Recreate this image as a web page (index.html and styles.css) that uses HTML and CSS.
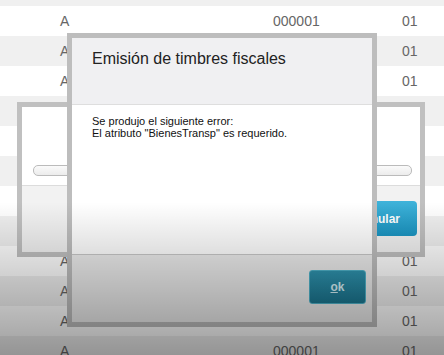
FILE: index.html
```html
<!DOCTYPE html>
<html lang="es">
<head>
    <meta charset="UTF-8" />
    <meta name="viewport" content="width=device-width, initial-scale=1.0" />
    <title>Emisión de timbres fiscales</title>
    <link rel="stylesheet" href="styles.css">
</head>

<body>
    <!-- tabla de fondo -->
    <div class="grid">
        <div class="stripe"></div>
        <div class="row"><span>A</span><span class="folio">000001</span><span>01</span></div>
        <div class="row"><span>A</span><span class="folio">000001</span><span>01</span></div>
        <div class="row"><span>A</span><span class="folio">000001</span><span>01</span></div>
        <div class="row"><span>A</span><span class="folio">000001</span><span>01</span></div>
        <div class="row"><span>A</span><span class="folio">000001</span><span>01</span></div>
        <div class="row"><span>A</span><span class="folio">000001</span><span>01</span></div>
        <div class="row"><span>A</span><span class="folio">000001</span><span>01</span></div>
        <div class="row"><span>A</span><span class="folio">000001</span><span>01</span></div>
        <div class="row"><span>A</span><span class="folio">000001</span><span>01</span></div>
        <div class="row"><span>A</span><span class="folio">000001</span><span>01</span></div>
        <div class="row"><span>A</span><span class="folio">000001</span><span>01</span></div>
        <div class="row"><span>A</span><span class="folio">000001</span><span>01</span></div>
    </div>

    <!-- dialogo de progreso -->
    <div class="dialog progress-dialog">
        <div class="progress-body">
            <div class="progress-bar"></div>
        </div>
        <div class="progress-footer">
            <button class="btn-cancel">Anular</button>
        </div>
    </div>

    <!-- dialogo de error -->
    <div class="dialog error-dialog">
        <div class="error-header">Emisión de timbres fiscales</div>
        <div class="error-body">
            Se produjo el siguiente error:<br>
            El atributo "BienesTransp" es requerido.
        </div>
        <div class="error-footer">
            <button class="btn-ok"><u>o</u>k</button>
        </div>
    </div>

    <div class="shade"></div>
</body>
</html>
```

FILE: styles.css
```css
body {
    margin: 0;
    font-family: 'Liberation Sans', Arial, sans-serif;
    background: #fff;
    overflow: hidden;
    height: 355px;
    position: relative;
}

.stripe {
    height: 6px;
}

.row {
    display: grid;
    grid-template-columns: 213px 129px 1fr;
    align-items: center;
    height: 30px;
    padding-left: 60px;
    font-size: 14px;
    color: #666;
}

.grid > div:nth-child(odd) {
    background: #f0f0f0;
}

.dialog {
    position: absolute;
    border: 5px solid #c0c0c0;
    background: #fff;
    display: flex;
    flex-direction: column;
}

/* dialogo de atras */
.progress-dialog {
    left: 17px;
    top: 102px;
    width: 398px;
    height: 145px;
}

.progress-body {
    height: 78px;
    padding: 58px 8px 0 11px;
    box-sizing: border-box;
}

.progress-bar {
    height: 9px;
    border: 1px solid #bbb;
    border-radius: 5px;
    background: linear-gradient(#fafafa, #ececec);
}

.progress-footer {
    flex: 1;
    border-top: 1px solid #dcdcdc;
    background: #f2f2f2;
    display: flex;
    justify-content: flex-end;
    align-items: flex-start;
    padding: 15px 3px 0 0;
}

.btn-cancel {
    width: 72px;
    height: 35px;
    border: none;
    border-radius: 4px;
    background: linear-gradient(#3fb3da, #1a94c1);
    color: #fff;
    font-family: 'Liberation Sans', Arial, sans-serif;
    font-weight: bold;
    font-size: 12px;
}

/* dialogo de error */
.error-dialog {
    left: 67px;
    top: 33px;
    width: 300px;
    height: 284px;
    border-color: #bdbdbd;
}

.error-header {
    height: 67px;
    box-sizing: border-box;
    padding: 10px 20px 0;
    line-height: 22px;
    font-size: 16px;
    color: #222;
    background: #f0f0f2;
    border-bottom: 1px solid #dedede;
}

.error-body {
    height: 149px;
    box-sizing: border-box;
    padding: 10px 20px 0;
    font-size: 11px;
    line-height: 12px;
    color: #111;
}

.error-footer {
    flex: 1;
    border-top: 1px solid #c8c8c8;
    background: #ececec;
    display: flex;
    justify-content: flex-end;
    align-items: flex-start;
    padding: 15px 6px 0 0;
}

.btn-ok {
    width: 57px;
    height: 34px;
    border: 1px solid #4fb2c9;
    border-radius: 3px;
    background: linear-gradient(#2f93ae, #1b7690);
    color: #d6f1f7;
    font-family: 'Liberation Sans', Arial, sans-serif;
    font-weight: bold;
    font-size: 12px;
}

/* sombra de abajo */
.shade {
    position: absolute;
    inset: 0;
    pointer-events: none;
    background: linear-gradient(rgba(0,0,0,0) 57%, rgba(0,0,0,0.38) 100%);
}
```
